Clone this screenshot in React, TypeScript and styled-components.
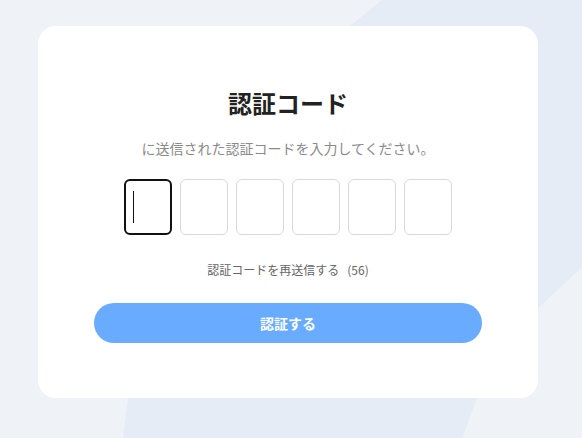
import styled, { createGlobalStyle } from 'styled-components'

const GlobalStyle = createGlobalStyle`
    html, body {
        margin: 0;
        padding: 0;
        background: #eff3f7;
    }
    body {
        font-family: "Noto Sans CJK JP", "Noto Sans", sans-serif;
    }
`

const Page = styled.div`
    position: relative;
    width: 582px;
    height: 438px;
    overflow: hidden;
    background: #eff3f7;
    padding: 26px 0 0 38px;
    box-sizing: border-box;
`

const Backdrop = styled.svg`
    position: absolute;
    left: 0;
    top: 0;
    width: 582px;
    height: 438px;
`

const Card = styled.div`
    position: relative;
    width: 500px;
    height: 372px;
    box-sizing: border-box;
    background: #ffffff;
    border-radius: 18px;
    padding: 61px 56px 0;
    display: flex;
    flex-direction: column;
    align-items: center;
`

const Title = styled.h1`
    margin: 0;
    font-size: 24px;
    line-height: 32px;
    font-weight: 700;
    color: #222222;
`

const Subtitle = styled.p`
    margin: 19px 0 0;
    font-size: 14px;
    line-height: 20px;
    color: #8a8a8a;
`

const CodeRow = styled.div`
    margin-top: 21px;
    display: flex;
    gap: 8px;
`

const CodeBox = styled.div<{ $active?: boolean }>`
    position: relative;
    width: 48px;
    height: 56px;
    box-sizing: border-box;
    border-radius: 6px;
    border: ${props => props.$active ? '2px solid #111111' : '1px solid #d9d9d9'};
    background: #ffffff;
`

const Caret = styled.span`
    position: absolute;
    left: 7px;
    top: 10px;
    width: 1px;
    height: 32px;
    background: #111111;
`

const Resend = styled.div`
    margin-top: 26px;
    font-size: 12px;
    line-height: 18px;
    color: #666666;
`

const Countdown = styled.span`
    margin-left: 8px;
`

const SubmitButton = styled.button`
    margin-top: 24px;
    width: 388px;
    height: 40px;
    border: none;
    border-radius: 20px;
    background: #69abff;
    color: #ffffff;
    font-family: inherit;
    font-size: 14px;
    font-weight: 700;
    cursor: pointer;
`

const App = () => {
    const digits = [0, 1, 2, 3, 4, 5]
    return (
        <>
            <GlobalStyle />
            <Page>
                <Backdrop viewBox="0 0 582 438">
                    <polygon
                        points="382,0 582,0 582,267 510,335 477,398 462,438 123,438 128,398 150,200 330,42"
                        fill="#e5ecf5"
                    />
                </Backdrop>
                <Card>
                    <Title>認証コード</Title>
                    <Subtitle>に送信された認証コードを入力してください。</Subtitle>
                    <CodeRow>
                        {digits.map(i => (
                            <CodeBox key={i} $active={i === 0}>
                                {i === 0 && <Caret />}
                            </CodeBox>
                        ))}
                    </CodeRow>
                    <Resend>
                        認証コードを再送信する
                        <Countdown>(56)</Countdown>
                    </Resend>
                    <SubmitButton>認証する</SubmitButton>
                </Card>
            </Page>
        </>
    )
}

export default App
